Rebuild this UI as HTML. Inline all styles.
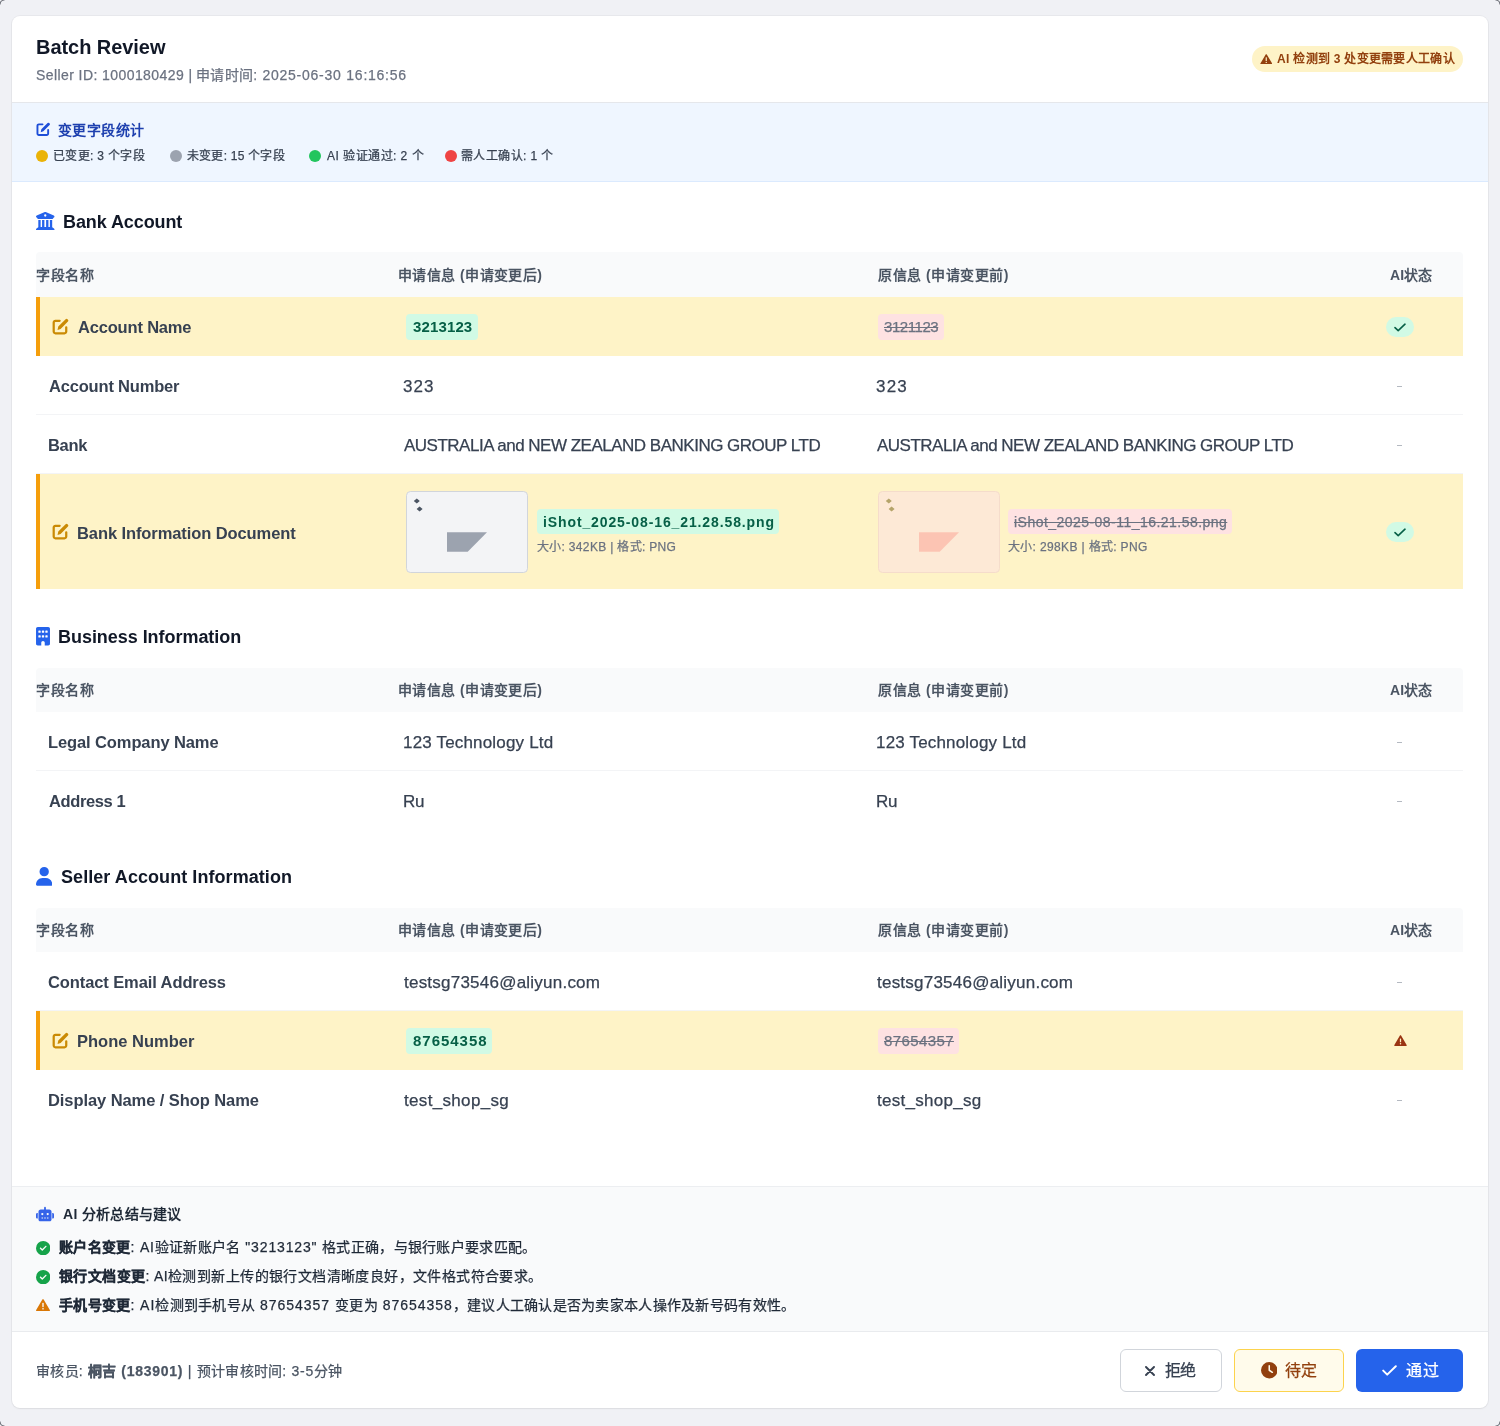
<!DOCTYPE html><html lang="zh-CN"><head><meta charset="utf-8"><style>
*{margin:0;padding:0}
html,body{width:1500px;height:1426px;overflow:hidden}
body{background:#f0f1f5;font-family:"Liberation Sans",sans-serif;position:relative}
.b{position:absolute;display:block}
.t{position:absolute;white-space:nowrap;will-change:transform}
b{font-weight:700}
.c{letter-spacing:0.02em}
</style></head><body>
<svg class="b" style="left:-8px;top:-8px;transform:rotate(0deg)" width="16" height="16" viewBox="0 0 16 16"><path d="M8 12.5A4.5 4.5 0 0 1 12.5 8" fill="none" stroke="#6b6e75" stroke-width="1.2"/></svg>
<svg class="b" style="left:1492px;top:-8px;transform:rotate(90deg)" width="16" height="16" viewBox="0 0 16 16"><path d="M8 12.5A4.5 4.5 0 0 1 12.5 8" fill="none" stroke="#6b6e75" stroke-width="1.2"/></svg>
<svg class="b" style="left:1492px;top:1418px;transform:rotate(180deg)" width="16" height="16" viewBox="0 0 16 16"><path d="M8 12.5A4.5 4.5 0 0 1 12.5 8" fill="none" stroke="#6b6e75" stroke-width="1.2"/></svg>
<svg class="b" style="left:-8px;top:1418px;transform:rotate(270deg)" width="16" height="16" viewBox="0 0 16 16"><path d="M8 12.5A4.5 4.5 0 0 1 12.5 8" fill="none" stroke="#6b6e75" stroke-width="1.2"/></svg>
<div class="b" style="left:12px;top:16px;width:1476px;height:1392px;background:#fff;border-radius:8px;box-shadow:0 0 0 1px rgba(0,0,0,.035),0 1px 2px rgba(0,0,0,.05)"></div>
<div class="b" style="left:12px;top:102px;width:1476px;height:1px;background:#e5e7eb"></div>
<div class="b" style="left:1252px;top:46px;width:211px;height:26px;background:#fef3c7;border-radius:13px"></div>
<svg class="b" style="left:1259.5px;top:53.5px" width="12.5" height="10.5" viewBox="0 0 24 21"><path d="M12 0.5c.6 0 1.1.3 1.4.8l10.3 17.6c.6 1-.1 2.1-1.3 2.1H1.6C.4 21-.3 19.9.3 18.9L10.6 1.3c.3-.5.8-.8 1.4-.8z" fill="#92400e"/><rect x="10.8" y="6.5" width="2.4" height="7.5" rx="1" fill="#fef3c7"/><circle cx="12" cy="16.8" r="1.4" fill="#fef3c7"/></svg>
<div class="b" style="left:12px;top:103px;width:1476px;height:78px;background:#eff6ff"></div>
<div class="b" style="left:12px;top:181px;width:1476px;height:1px;background:#dbeafe"></div>
<svg class="b" style="left:36px;top:122px" width="14.5" height="14.5" viewBox="0 0 16 16"><path d="M7.2 2.6H3.2A1.6 1.6 0 0 0 1.6 4.2v8.6A1.6 1.6 0 0 0 3.2 14.4h8.6A1.6 1.6 0 0 0 13.4 12.8V8.8" fill="none" stroke="#1d4ed8" stroke-width="2.1" stroke-linecap="round"/><path d="M5.2 11.2l.7-3.1 6.9-6.9a1.3 1.3 0 0 1 1.85 0l.35.35a1.3 1.3 0 0 1 0 1.85l-6.9 6.9z" fill="#1d4ed8"/></svg>
<div class="b" style="left:36px;top:150px;width:12px;height:12px;background:#eab308;border-radius:50%"></div>
<div class="b" style="left:169.5px;top:150px;width:12.0px;height:12px;background:#9ca3af;border-radius:50%"></div>
<div class="b" style="left:308.7px;top:150px;width:12.0px;height:12px;background:#22c55e;border-radius:50%"></div>
<div class="b" style="left:444.8px;top:150px;width:12.0px;height:12px;background:#ef4444;border-radius:50%"></div>
<svg class="b" style="left:36px;top:211.5px" width="18.5" height="18.5" viewBox="0 0 512 512"><path fill="#2563eb" d="M243.4 2.6l-224 96c-14 6-21.8 21-18.7 35.8S16.8 160 32 160v8c0 13.3 10.7 24 24 24H456c13.3 0 24-10.7 24-24v-8c15.2 0 28.3-10.7 31.3-25.6s-4.8-29.9-18.7-35.8l-224-96c-8-3.4-17.2-3.4-25.2 0zM128 224H64V420.3c-.6 .3-1.2 .7-1.8 1.1l-48 32c-11.7 7.8-17 22.4-12.9 35.9S17.9 512 32 512H480c14.1 0 26.5-9.2 30.6-22.7s-1.1-28.1-12.9-35.9l-48-32c-.6-.4-1.2-.7-1.8-1.1V224H384V416H344V224H280V416H232V224H168V416H128V224zM256 64a32 32 0 1 1 0 64 32 32 0 1 1 0-64z"/></svg>
<div class="b" style="left:36px;top:252px;width:1427px;height:45px;background:#f9fafb;border-radius:4px 4px 0 0"></div>
<div class="b" style="left:36px;top:297px;width:1427px;height:59px;background:#fef3c7"></div>
<div class="b" style="left:36px;top:297px;width:4px;height:59px;background:#f59e0b"></div>
<svg class="b" style="left:52px;top:318.0px" width="17" height="17" viewBox="0 0 16 16"><path d="M7.2 2.6H3.2A1.6 1.6 0 0 0 1.6 4.2v8.6A1.6 1.6 0 0 0 3.2 14.4h8.6A1.6 1.6 0 0 0 13.4 12.8V8.8" fill="none" stroke="#ca8a04" stroke-width="2.1" stroke-linecap="round"/><path d="M5.2 11.2l.7-3.1 6.9-6.9a1.3 1.3 0 0 1 1.85 0l.35.35a1.3 1.3 0 0 1 0 1.85l-6.9 6.9z" fill="#ca8a04"/></svg>
<div class="b" style="left:406.3px;top:314.0px;width:71.30000000000001px;height:25.5px;background:#d1fae5;border-radius:4px"></div>
<div class="b" style="left:878.2px;top:314.0px;width:65.89999999999998px;height:25.5px;background:#fee2e2;border-radius:4px"></div>
<div class="b" style="left:1386px;top:316.5px;width:28px;height:20.0px;background:#d1fae5;border-radius:10px"></div>
<svg class="b" style="left:1394px;top:322.5px" width="12" height="9" viewBox="0 0 12 9"><path d="M1 4.6 4.2 7.6 11 1.2" fill="none" stroke="#065f46" stroke-width="1.6" stroke-linecap="round" stroke-linejoin="round"/></svg>
<div class="b" style="left:36px;top:414px;width:1427px;height:1px;background:#f3f4f6"></div>
<div class="b" style="left:1397px;top:385.5px;width:5px;height:1.0px;background:#b4b9c1"></div>
<div class="b" style="left:36px;top:473px;width:1427px;height:1px;background:#f3f4f6"></div>
<div class="b" style="left:1397px;top:444.5px;width:5px;height:1.0px;background:#b4b9c1"></div>
<div class="b" style="left:36px;top:474px;width:1427px;height:115px;background:#fef3c7"></div>
<div class="b" style="left:36px;top:474px;width:4px;height:115px;background:#f59e0b"></div>
<svg class="b" style="left:52px;top:523.0px" width="17" height="17" viewBox="0 0 16 16"><path d="M7.2 2.6H3.2A1.6 1.6 0 0 0 1.6 4.2v8.6A1.6 1.6 0 0 0 3.2 14.4h8.6A1.6 1.6 0 0 0 13.4 12.8V8.8" fill="none" stroke="#ca8a04" stroke-width="2.1" stroke-linecap="round"/><path d="M5.2 11.2l.7-3.1 6.9-6.9a1.3 1.3 0 0 1 1.85 0l.35.35a1.3 1.3 0 0 1 0 1.85l-6.9 6.9z" fill="#ca8a04"/></svg>
<svg class="b" style="left:406px;top:491px" width="122" height="82" viewBox="0 0 122 82"><rect x="0.5" y="0.5" width="121" height="81" rx="4" fill="#f3f4f6" stroke="#d1d5db"/><path d="M7.8 9.9l3-2.5 3 2.5-3 2.5z M10.6 18l3-2.5 3 2.5-3 2.5z" fill="#4b5563"/><path d="M41 41.2H81L61.7 60.8H41z" fill="#9ca3af"/></svg>
<svg class="b" style="left:877.5px;top:491px" width="122" height="82" viewBox="0 0 122 82"><rect x="0.5" y="0.5" width="121" height="81" rx="4" fill="#fde9d6" stroke="#f5dccb"/><path d="M7.8 9.9l3-2.5 3 2.5-3 2.5z M10.6 18l3-2.5 3 2.5-3 2.5z" fill="#b5a46a"/><path d="M41 41.2H81L61.7 60.8H41z" fill="#fcc4b3"/></svg>
<div class="b" style="left:537.3px;top:509px;width:241.4000000000001px;height:25px;background:#d1fae5;border-radius:4px"></div>
<div class="b" style="left:1008.3px;top:509px;width:223.9000000000001px;height:25px;background:#fee2e2;border-radius:4px"></div>
<div class="b" style="left:1386px;top:521.5px;width:28px;height:20.0px;background:#d1fae5;border-radius:10px"></div>
<svg class="b" style="left:1394px;top:527.5px" width="12" height="9" viewBox="0 0 12 9"><path d="M1 4.6 4.2 7.6 11 1.2" fill="none" stroke="#065f46" stroke-width="1.6" stroke-linecap="round" stroke-linejoin="round"/></svg>
<svg class="b" style="left:36px;top:627px" width="14" height="18.6" viewBox="0 0 384 512"><path fill="#2563eb" d="M48 0C21.5 0 0 21.5 0 48V464c0 26.5 21.5 48 48 48h96V432c0-26.5 21.5-48 48-48s48 21.5 48 48v80h96c26.5 0 48-21.5 48-48V48c0-26.5-21.5-48-48-48H48zM64 240c0-8.8 7.2-16 16-16h32c8.8 0 16 7.2 16 16v32c0 8.8-7.2 16-16 16H80c-8.8 0-16-7.2-16-16V240zm112-16h32c8.8 0 16 7.2 16 16v32c0 8.8-7.2 16-16 16H176c-8.8 0-16-7.2-16-16V240c0-8.8 7.2-16 16-16zm80 16c0-8.8 7.2-16 16-16h32c8.8 0 16 7.2 16 16v32c0 8.8-7.2 16-16 16H272c-8.8 0-16-7.2-16-16V240zM80 96h32c8.8 0 16 7.2 16 16v32c0 8.8-7.2 16-16 16H80c-8.8 0-16-7.2-16-16V112c0-8.8 7.2-16 16-16zm80 16c0-8.8 7.2-16 16-16h32c8.8 0 16 7.2 16 16v32c0 8.8-7.2 16-16 16H176c-8.8 0-16-7.2-16-16V112zM272 96h32c8.8 0 16 7.2 16 16v32c0 8.8-7.2 16-16 16H272c-8.8 0-16-7.2-16-16V112c0-8.8 7.2-16 16-16z"/></svg>
<div class="b" style="left:36px;top:668px;width:1427px;height:44px;background:#f9fafb;border-radius:4px 4px 0 0"></div>
<div class="b" style="left:36px;top:770px;width:1427px;height:1px;background:#f3f4f6"></div>
<div class="b" style="left:1397px;top:741.5px;width:5px;height:1.0px;background:#b4b9c1"></div>
<div class="b" style="left:1397px;top:800.5px;width:5px;height:1.0px;background:#b4b9c1"></div>
<svg class="b" style="left:36px;top:867px" width="16.4" height="18.7" viewBox="0 0 448 512"><path fill="#2563eb" d="M224 256A128 128 0 1 0 224 0a128 128 0 1 0 0 256zm-45.7 48C79.8 304 0 383.8 0 482.3C0 498.7 13.3 512 29.7 512H418.3c16.4 0 29.7-13.3 29.7-29.7C448 383.8 368.2 304 269.7 304H178.3z"/></svg>
<div class="b" style="left:36px;top:908px;width:1427px;height:44px;background:#f9fafb;border-radius:4px 4px 0 0"></div>
<div class="b" style="left:36px;top:1010px;width:1427px;height:1px;background:#f3f4f6"></div>
<div class="b" style="left:1397px;top:981.5px;width:5px;height:1.0px;background:#b4b9c1"></div>
<div class="b" style="left:36px;top:1011px;width:1427px;height:59px;background:#fef3c7"></div>
<div class="b" style="left:36px;top:1011px;width:4px;height:59px;background:#f59e0b"></div>
<svg class="b" style="left:52px;top:1032.0px" width="17" height="17" viewBox="0 0 16 16"><path d="M7.2 2.6H3.2A1.6 1.6 0 0 0 1.6 4.2v8.6A1.6 1.6 0 0 0 3.2 14.4h8.6A1.6 1.6 0 0 0 13.4 12.8V8.8" fill="none" stroke="#ca8a04" stroke-width="2.1" stroke-linecap="round"/><path d="M5.2 11.2l.7-3.1 6.9-6.9a1.3 1.3 0 0 1 1.85 0l.35.35a1.3 1.3 0 0 1 0 1.85l-6.9 6.9z" fill="#ca8a04"/></svg>
<div class="b" style="left:406.3px;top:1028.0px;width:85.80000000000001px;height:25.5px;background:#d1fae5;border-radius:4px"></div>
<div class="b" style="left:878.2px;top:1028.0px;width:80.79999999999995px;height:25.5px;background:#fee2e2;border-radius:4px"></div>
<svg class="b" style="left:1393.5px;top:1035.0px" width="13" height="11" viewBox="0 0 24 21"><path d="M12 0.5c.6 0 1.1.3 1.4.8l10.3 17.6c.6 1-.1 2.1-1.3 2.1H1.6C.4 21-.3 19.9.3 18.9L10.6 1.3c.3-.5.8-.8 1.4-.8z" fill="#9a3412"/><rect x="10.8" y="6.5" width="2.4" height="7.5" rx="1" fill="#fef3c7"/><circle cx="12" cy="16.8" r="1.4" fill="#fef3c7"/></svg>
<div class="b" style="left:1397px;top:1099.5px;width:5px;height:1.0px;background:#b4b9c1"></div>
<div class="b" style="left:12px;top:1186px;width:1476px;height:1px;background:#eceef1"></div>
<div class="b" style="left:12px;top:1187px;width:1476px;height:144px;background:#f9fafb"></div>
<div class="b" style="left:12px;top:1331px;width:1476px;height:1px;background:#e9ebee"></div>
<svg class="b" style="left:36px;top:1206px" width="18" height="16" viewBox="0 0 640 512"><path fill="#3563e9" d="M320 0c17.7 0 32 14.3 32 32V96H472c44.2 0 80 35.8 80 80V448c0 35.3-28.7 64-64 64H152c-35.3 0-64-28.7-64-64V176c0-44.2 35.8-80 80-80H288V32c0-17.7 14.3-32 32-32zM208 384c-8.8 0-16 7.2-16 16s7.2 16 16 16h32c8.8 0 16-7.2 16-16s-7.2-16-16-16H208zm96 0c-8.8 0-16 7.2-16 16s7.2 16 16 16h32c8.8 0 16-7.2 16-16s-7.2-16-16-16H304zm96 0c-8.8 0-16 7.2-16 16s7.2 16 16 16h32c8.8 0 16-7.2 16-16s-7.2-16-16-16H400zM264 256a40 40 0 1 0 -80 0 40 40 0 1 0 80 0zm152 40a40 40 0 1 0 0-80 40 40 0 1 0 0 80zM48 224H64V416H48c-26.5 0-48-21.5-48-48V272c0-26.5 21.5-48 48-48zm544 0c26.5 0 48 21.5 48 48v96c0 26.5-21.5 48-48 48H576V224h16z"/></svg>
<svg class="b" style="left:36px;top:1240.6px" width="14.4" height="14.4" viewBox="0 0 512 512"><path fill="#16a34a" d="M256 512A256 256 0 1 0 256 0a256 256 0 1 0 0 512zM369 209L241 337c-9.4 9.4-24.6 9.4-33.9 0l-64-64c-9.4-9.4-9.4-24.6 0-33.9s24.6-9.4 33.9 0l47 47L335 175c9.4-9.4 24.6-9.4 33.9 0s9.4 24.6 0 33.9z"/></svg>
<svg class="b" style="left:36px;top:1269.6px" width="14.4" height="14.4" viewBox="0 0 512 512"><path fill="#16a34a" d="M256 512A256 256 0 1 0 256 0a256 256 0 1 0 0 512zM369 209L241 337c-9.4 9.4-24.6 9.4-33.9 0l-64-64c-9.4-9.4-9.4-24.6 0-33.9s24.6-9.4 33.9 0l47 47L335 175c9.4-9.4 24.6-9.4 33.9 0s9.4 24.6 0 33.9z"/></svg>
<svg class="b" style="left:36px;top:1298.5px" width="14" height="12.3" viewBox="0 0 24 21"><path d="M12 0.5c.6 0 1.1.3 1.4.8l10.3 17.6c.6 1-.1 2.1-1.3 2.1H1.6C.4 21-.3 19.9.3 18.9L10.6 1.3c.3-.5.8-.8 1.4-.8z" fill="#d97706"/><rect x="10.8" y="6.5" width="2.4" height="7.5" rx="1" fill="#f9fafb"/><circle cx="12" cy="16.8" r="1.4" fill="#f9fafb"/></svg>
<div class="b" style="left:1119.5px;top:1349px;width:102.0px;height:43px;background:#fff;border:1px solid #d1d5db;border-radius:6px;box-sizing:border-box"></div>
<svg class="b" style="left:1145px;top:1365.5px" width="10" height="10" viewBox="0 0 10 10"><path d="M1 1 9 9M9 1 1 9" stroke="#374151" stroke-width="1.9" stroke-linecap="round"/></svg>
<div class="b" style="left:1234.2px;top:1349px;width:109.5px;height:43px;background:#fffbeb;border:1px solid #fcd34d;border-radius:6px;box-sizing:border-box"></div>
<svg class="b" style="left:1260.5px;top:1362px" width="16.5" height="16.5" viewBox="0 0 512 512"><path fill="#92400e" d="M256 0a256 256 0 1 1 0 512A256 256 0 1 1 256 0zM232 120V256c0 8 4 15.5 10.7 20l96 64c11 7.4 25.9 4.4 33.3-6.7s4.4-25.9-6.7-33.3L280 243.2V120c0-13.3-10.7-24-24-24s-24 10.7-24 24z"/></svg>
<div class="b" style="left:1355.8px;top:1349px;width:107.20000000000005px;height:43px;background:#2563eb;border-radius:6px"></div>
<svg class="b" style="left:1381.5px;top:1365px" width="15" height="11" viewBox="0 0 15 11"><path d="M1.2 5.6 5.2 9.6 13.8 1.2" fill="none" stroke="#fff" stroke-width="2" stroke-linecap="round" stroke-linejoin="round"/></svg>
<div class="t " id="t0" style="left:35.70px;top:36.72px;font-size:20px;line-height:20px;color:#111827;font-weight:700;letter-spacing:-0.055px;">Batch Review</div>
<div class="t " id="t1" style="left:36.06px;top:67.85px;font-size:14px;line-height:14px;color:#6b7280;font-weight:400;letter-spacing:0.418px;;-webkit-text-stroke:0.25px currentColor">Seller ID: 1000180429 |</div>
<div class="t " id="t2" style="left:195.76px;top:67.85px;font-size:14px;line-height:14px;color:#6b7280;font-weight:400;letter-spacing:0.760px;;-webkit-text-stroke:0.25px currentColor"><span class="c">申请时间</span>: 2025-06-30 16:16:56</div>
<div class="t " id="t3" style="left:1276.78px;top:53.04px;font-size:12px;line-height:12px;color:#92400e;font-weight:700;letter-spacing:0.294px;">AI 检测到 3 处变更需要人工确认</div>
<div class="t " id="t4" style="left:58.16px;top:122.55px;font-size:14px;line-height:14px;color:#1e40af;font-weight:700;letter-spacing:0.400px;">变更字段统计</div>
<div class="t " id="t5" style="left:52.78px;top:150.34px;font-size:12px;line-height:12px;color:#374151;font-weight:400;letter-spacing:0.333px;;-webkit-text-stroke:0.25px currentColor">已变更: 3 个字段</div>
<div class="t " id="t6" style="left:187.28px;top:150.34px;font-size:12px;line-height:12px;color:#374151;font-weight:400;letter-spacing:0.220px;;-webkit-text-stroke:0.25px currentColor">未变更: 15 个字段</div>
<div class="t " id="t7" style="left:326.68px;top:150.34px;font-size:12px;line-height:12px;color:#374151;font-weight:400;letter-spacing:0.473px;;-webkit-text-stroke:0.25px currentColor">AI 验证通过: 2 个</div>
<div class="t " id="t8" style="left:461.38px;top:150.34px;font-size:12px;line-height:12px;color:#374151;font-weight:400;letter-spacing:0.400px;;-webkit-text-stroke:0.25px currentColor">需人工确认: 1 个</div>
<div class="t " id="t9" style="left:62.92px;top:212.96px;font-size:18px;line-height:18px;color:#111827;font-weight:700;letter-spacing:-0.091px;">Bank Account</div>
<div class="t " id="t10" style="left:36.26px;top:267.55px;font-size:14px;line-height:14px;color:#4b5563;font-weight:700;letter-spacing:0.667px;">字段名称</div>
<div class="t " id="t11" style="left:397.56px;top:267.55px;font-size:14px;line-height:14px;color:#4b5563;font-weight:700;letter-spacing:0.436px;">申请信息 (申请变更后)</div>
<div class="t " id="t12" style="left:878.16px;top:267.55px;font-size:14px;line-height:14px;color:#4b5563;font-weight:700;letter-spacing:0.520px;">原信息 (申请变更前)</div>
<div class="t " id="t13" style="left:1390.26px;top:267.55px;font-size:14px;line-height:14px;color:#4b5563;font-weight:700;letter-spacing:0.067px;">AI状态</div>
<div class="t " id="t14" style="left:77.91px;top:319.11px;font-size:16.5px;line-height:16.5px;color:#374151;font-weight:700;letter-spacing:-0.182px;">Account Name</div>
<div class="t " id="t15" style="left:413.10px;top:319.05px;font-size:15px;line-height:15px;color:#065f46;font-weight:700;letter-spacing:0.133px;">3213123</div>
<div class="t " id="t16" style="left:884.10px;top:319.05px;font-size:15px;line-height:15px;color:#6b7280;font-weight:400;letter-spacing:-0.433px;text-decoration:line-through;-webkit-text-stroke:0.25px currentColor">3121123</div>
<div class="t " id="t17" style="left:48.61px;top:378.11px;font-size:16.5px;line-height:16.5px;color:#374151;font-weight:700;letter-spacing:-0.185px;">Account Number</div>
<div class="t " id="t18" style="left:402.98px;top:377.86px;font-size:17px;line-height:17px;color:#374151;font-weight:400;letter-spacing:1.100px;;-webkit-text-stroke:0.25px currentColor">323</div>
<div class="t " id="t19" style="left:875.98px;top:377.86px;font-size:17px;line-height:17px;color:#374151;font-weight:400;letter-spacing:1.200px;;-webkit-text-stroke:0.25px currentColor">323</div>
<div class="t " id="t20" style="left:47.61px;top:437.11px;font-size:16.5px;line-height:16.5px;color:#374151;font-weight:700;letter-spacing:-0.333px;">Bank</div>
<div class="t " id="t21" style="left:403.98px;top:436.86px;font-size:17px;line-height:17px;color:#374151;font-weight:400;letter-spacing:-0.500px;;-webkit-text-stroke:0.25px currentColor">AUSTRALIA and NEW ZEALAND BANKING GROUP LTD</div>
<div class="t " id="t22" style="left:876.98px;top:436.86px;font-size:17px;line-height:17px;color:#374151;font-weight:400;letter-spacing:-0.500px;;-webkit-text-stroke:0.25px currentColor">AUSTRALIA and NEW ZEALAND BANKING GROUP LTD</div>
<div class="t " id="t23" style="left:76.91px;top:524.81px;font-size:16.5px;line-height:16.5px;color:#374151;font-weight:700;letter-spacing:-0.092px;">Bank Information Document</div>
<div class="t " id="t24" style="left:542.66px;top:514.55px;font-size:14px;line-height:14px;color:#065f46;font-weight:700;letter-spacing:0.886px;">iShot_2025-08-16_21.28.58.png</div>
<div class="t " id="t25" style="left:537.38px;top:541.34px;font-size:12px;line-height:12px;color:#6b7280;font-weight:400;letter-spacing:0.343px;;-webkit-text-stroke:0.25px currentColor"><span class="c">大小</span>: 342KB | <span class="c">格式</span>: PNG</div>
<div class="t " id="t26" style="left:1014.06px;top:514.55px;font-size:14px;line-height:14px;color:#6b7280;font-weight:400;letter-spacing:0.464px;text-decoration:line-through;-webkit-text-stroke:0.25px currentColor">iShot_2025-08-11_16.21.58.png</div>
<div class="t " id="t27" style="left:1008.38px;top:541.34px;font-size:12px;line-height:12px;color:#6b7280;font-weight:400;letter-spacing:0.371px;;-webkit-text-stroke:0.25px currentColor"><span class="c">大小</span>: 298KB | <span class="c">格式</span>: PNG</div>
<div class="t " id="t28" style="left:57.92px;top:627.71px;font-size:18px;line-height:18px;color:#111827;font-weight:700;letter-spacing:-0.042px;">Business Information</div>
<div class="t " id="t29" style="left:36.26px;top:683.05px;font-size:14px;line-height:14px;color:#4b5563;font-weight:700;letter-spacing:0.667px;">字段名称</div>
<div class="t " id="t30" style="left:397.56px;top:683.05px;font-size:14px;line-height:14px;color:#4b5563;font-weight:700;letter-spacing:0.436px;">申请信息 (申请变更后)</div>
<div class="t " id="t31" style="left:878.16px;top:683.05px;font-size:14px;line-height:14px;color:#4b5563;font-weight:700;letter-spacing:0.520px;">原信息 (申请变更前)</div>
<div class="t " id="t32" style="left:1390.26px;top:683.05px;font-size:14px;line-height:14px;color:#4b5563;font-weight:700;letter-spacing:0.067px;">AI状态</div>
<div class="t " id="t33" style="left:47.61px;top:734.11px;font-size:16.5px;line-height:16.5px;color:#374151;font-weight:700;letter-spacing:-0.106px;">Legal Company Name</div>
<div class="t " id="t34" style="left:402.98px;top:733.86px;font-size:17px;line-height:17px;color:#374151;font-weight:400;letter-spacing:0.176px;;-webkit-text-stroke:0.25px currentColor">123 Technology Ltd</div>
<div class="t " id="t35" style="left:875.98px;top:733.86px;font-size:17px;line-height:17px;color:#374151;font-weight:400;letter-spacing:0.176px;;-webkit-text-stroke:0.25px currentColor">123 Technology Ltd</div>
<div class="t " id="t36" style="left:48.61px;top:793.11px;font-size:16.5px;line-height:16.5px;color:#374151;font-weight:700;letter-spacing:-0.375px;">Address 1</div>
<div class="t " id="t37" style="left:402.98px;top:792.86px;font-size:17px;line-height:17px;color:#374151;font-weight:400;letter-spacing:-0.400px;;-webkit-text-stroke:0.25px currentColor">Ru</div>
<div class="t " id="t38" style="left:875.98px;top:792.86px;font-size:17px;line-height:17px;color:#374151;font-weight:400;letter-spacing:-0.400px;;-webkit-text-stroke:0.25px currentColor">Ru</div>
<div class="t " id="t39" style="left:60.72px;top:867.81px;font-size:18px;line-height:18px;color:#111827;font-weight:700;letter-spacing:0.064px;">Seller Account Information</div>
<div class="t " id="t40" style="left:36.26px;top:923.05px;font-size:14px;line-height:14px;color:#4b5563;font-weight:700;letter-spacing:0.667px;">字段名称</div>
<div class="t " id="t41" style="left:397.56px;top:923.05px;font-size:14px;line-height:14px;color:#4b5563;font-weight:700;letter-spacing:0.436px;">申请信息 (申请变更后)</div>
<div class="t " id="t42" style="left:878.16px;top:923.05px;font-size:14px;line-height:14px;color:#4b5563;font-weight:700;letter-spacing:0.520px;">原信息 (申请变更前)</div>
<div class="t " id="t43" style="left:1390.26px;top:923.05px;font-size:14px;line-height:14px;color:#4b5563;font-weight:700;letter-spacing:0.067px;">AI状态</div>
<div class="t " id="t44" style="left:47.61px;top:974.11px;font-size:16.5px;line-height:16.5px;color:#374151;font-weight:700;letter-spacing:-0.100px;">Contact Email Address</div>
<div class="t " id="t45" style="left:403.98px;top:973.86px;font-size:17px;line-height:17px;color:#374151;font-weight:400;letter-spacing:0.229px;;-webkit-text-stroke:0.25px currentColor">testsg73546@aliyun.com</div>
<div class="t " id="t46" style="left:876.98px;top:973.86px;font-size:17px;line-height:17px;color:#374151;font-weight:400;letter-spacing:0.229px;;-webkit-text-stroke:0.25px currentColor">testsg73546@aliyun.com</div>
<div class="t " id="t47" style="left:76.91px;top:1033.11px;font-size:16.5px;line-height:16.5px;color:#374151;font-weight:700;letter-spacing:0.000px;">Phone Number</div>
<div class="t " id="t48" style="left:413.10px;top:1033.05px;font-size:15px;line-height:15px;color:#065f46;font-weight:700;letter-spacing:0.971px;">87654358</div>
<div class="t " id="t49" style="left:884.10px;top:1033.05px;font-size:15px;line-height:15px;color:#6b7280;font-weight:400;letter-spacing:0.400px;text-decoration:line-through;-webkit-text-stroke:0.25px currentColor">87654357</div>
<div class="t " id="t50" style="left:47.61px;top:1092.11px;font-size:16.5px;line-height:16.5px;color:#374151;font-weight:700;letter-spacing:-0.078px;">Display Name / Shop Name</div>
<div class="t " id="t51" style="left:403.98px;top:1091.86px;font-size:17px;line-height:17px;color:#374151;font-weight:400;letter-spacing:0.327px;;-webkit-text-stroke:0.25px currentColor">test_shop_sg</div>
<div class="t " id="t52" style="left:876.98px;top:1091.86px;font-size:17px;line-height:17px;color:#374151;font-weight:400;letter-spacing:0.291px;;-webkit-text-stroke:0.25px currentColor">test_shop_sg</div>
<div class="t " id="t53" style="left:62.76px;top:1207.05px;font-size:14px;line-height:14px;color:#1f2937;font-weight:700;letter-spacing:0.289px;">AI 分析总结与建议</div>
<div class="t " id="t54" style="left:58.76px;top:1240.35px;font-size:14px;line-height:14px;color:#1f2937;font-weight:400;letter-spacing:0.857px;;-webkit-text-stroke:0.25px currentColor"><b><span class="c">账户名变更</span></b>: AI<span class="c">验证新账户名</span> "3213123" <span class="c">格式正确，与银行账户要求匹配。</span></div>
<div class="t " id="t55" style="left:58.76px;top:1269.35px;font-size:14px;line-height:14px;color:#1f2937;font-weight:400;letter-spacing:0.406px;;-webkit-text-stroke:0.25px currentColor"><b>银行文档变更</b>: AI检测到新上传的银行文档清晰度良好，文件格式符合要求。</div>
<div class="t " id="t56" style="left:58.76px;top:1298.35px;font-size:14px;line-height:14px;color:#1f2937;font-weight:400;letter-spacing:0.964px;;-webkit-text-stroke:0.25px currentColor"><b><span class="c">手机号变更</span></b>: AI<span class="c">检测到手机号从</span> 87654357 <span class="c">变更为</span> 87654358<span class="c">，建议人工确认是否为卖家本人操作及新号码有效性。</span></div>
<div class="t " id="t57" style="left:35.76px;top:1363.65px;font-size:14px;line-height:14px;color:#4b5563;font-weight:400;letter-spacing:0.722px;;-webkit-text-stroke:0.25px currentColor"><span class="c">审核员</span>: <b><span class="c">桐吉</span> (183901)</b> | <span class="c">预计审核时间</span>: 3-5<span class="c">分钟</span></div>
<div class="t " id="t58" style="left:1164.54px;top:1362.76px;font-size:16px;line-height:16px;color:#374151;font-weight:400;letter-spacing:-1.000px;;-webkit-text-stroke:0.25px currentColor">拒绝</div>
<div class="t " id="t59" style="left:1285.14px;top:1362.76px;font-size:16px;line-height:16px;color:#92400e;font-weight:400;letter-spacing:0.200px;;-webkit-text-stroke:0.25px currentColor">待定</div>
<div class="t " id="t60" style="left:1405.64px;top:1362.76px;font-size:16px;line-height:16px;color:#ffffff;font-weight:400;letter-spacing:1.200px;;-webkit-text-stroke:0.25px currentColor">通过</div>
</body></html>
